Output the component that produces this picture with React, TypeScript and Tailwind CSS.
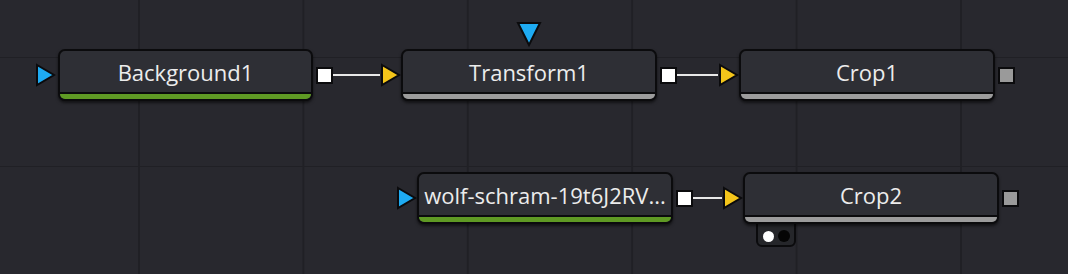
import React from "react";

type Bar = "green" | "grey";

// one tool node in the flow graph
function Node({
  label,
  bar,
  w = "w-[256px]",
  children,
}: {
  label: string;
  bar: Bar;
  w?: string;
  children?: React.ReactNode;
}) {
  return (
    <div className={`relative h-[52px] shrink-0 ${w}`}>
      {children}
      <div className="relative flex h-full flex-col overflow-hidden rounded-[7px] border-2 border-[#0b0b0d] bg-[#2e2f35] shadow-[0_2px_3px_rgba(0,0,0,0.55)]">
        <div className="flex flex-1 items-center justify-center whitespace-nowrap px-1 text-[22px] leading-none text-[#ececec] [font-family:'Open_Sans',sans-serif]">
          {label}
        </div>
        <div className={`h-[7px] border-t-2 border-[#0b0b0d] ${bar === "green" ? "bg-[#5f9a24]" : "bg-[#9c9c9c]"}`} />
      </div>
    </div>
  );
}

// input triangle pointing right
function InTri({ color }: { color: "blue" | "yellow" }) {
  return (
    <svg className="shrink-0" width="21" height="24" viewBox="0 0 21 24">
      <polygon
        points="2,2 19,12 2,22"
        fill={color === "blue" ? "#1eabf2" : "#f4c51a"}
        stroke="#0b0b0d"
        strokeWidth="2"
      />
    </svg>
  );
}

function OutSquare({ grey }: { grey?: boolean }) {
  return (
    <div
      className={`ml-[3px] h-[17px] w-[17px] shrink-0 border-2 border-[#0b0b0d] ${grey ? "bg-[#9a9a9a]" : "bg-white"}`}
    />
  );
}

function Wire({ w }: { w: string }) {
  return <div className={`h-[2px] shrink-0 bg-[#e8e8e8] ${w}`} />;
}

export default function App() {
  return (
    <div className="h-[274px] w-[1068px] overflow-hidden bg-[#28282e] bg-[linear-gradient(to_right,#202025_2px,transparent_2px),linear-gradient(to_bottom,#202025_2px,transparent_2px)] bg-[length:164.4px_109px] bg-[position:138px_56px]">
      <div className="flex flex-col gap-[71px] pt-[49px]">
        {/* row 1 */}
        <div className="flex items-center pl-[35px]">
          <InTri color="blue" />
          <div className="ml-[2px]">
            <Node label="Background1" bar="green" w="w-[255px]" />
          </div>
          <OutSquare />
          <Wire w="w-[47px]" />
          <InTri color="yellow" />
          <Node label="Transform1" bar="grey">
            {/* mask input */}
            <svg className="absolute left-1/2 top-[-28px] -translate-x-1/2" width="26" height="27" viewBox="0 0 26 27">
              <polygon points="2,2 24,2 13,24" fill="#1eabf2" stroke="#0b0b0d" strokeWidth="2" />
            </svg>
          </Node>
          <OutSquare />
          <Wire w="w-[41px]" />
          <InTri color="yellow" />
          <Node label="Crop1" bar="grey" />
          <OutSquare grey />
        </div>

        {/* row 2 */}
        <div className="flex items-center pl-[396px]">
          <InTri color="blue" />
          <Node label="wolf-schram-19t6J2RV..." bar="green" />
          <OutSquare />
          <Wire w="w-[29px]" />
          <InTri color="yellow" />
          <Node label="Crop2" bar="grey">
            {/* effect mask pill, tucked under the node */}
            <div className="absolute left-[13px] top-[46px] flex h-[29px] w-[40px] items-end justify-center gap-[4px] rounded-b-[6px] border-2 border-[#0b0b0d] bg-[#25262a] pb-[3px]">
              <span className="h-[11px] w-[11px] rounded-full bg-white" />
              <span className="h-[12px] w-[12px] rounded-full bg-[#050505]" />
            </div>
          </Node>
          <OutSquare grey />
        </div>
      </div>
    </div>
  );
}
